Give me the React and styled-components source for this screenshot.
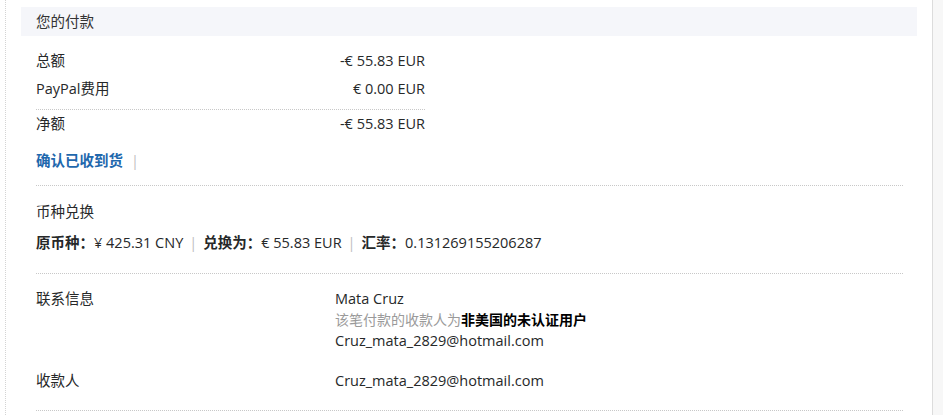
import React from "react";
import styled, { createGlobalStyle } from "styled-components";

const Global = createGlobalStyle`
    html, body {
        margin: 0;
        padding: 0;
        background: #fff;
    }
    body {
        font-family: "Open Sans", "Noto Sans CJK SC", sans-serif;
        color: #262829;
        font-size: 14.5px;
    }
`;

const Frame = styled.div`
    display: flex;
    height: 415px;
    overflow: hidden;
`;

const Main = styled.div`
    flex: 1;
    margin-left: 5px;
    border-left: 1px dotted #d4d4d4;
    border-right: 1px solid #dcdcdc;
    padding: 7px 15px 0 15px;
`;

const Side = styled.div`
    width: 10px;
    background: #f7f7f7;
`;

const Header = styled.div`
    height: 29px;
    line-height: 29px;
    padding-left: 15px;
    background: #f5f6fa;
    color: #333;
`;

const Section = styled.div`
    padding: ${(p) => p.pad || "0"};
    margin: 0 14px 0 15px;
    border-bottom: ${(p) => (p.line ? "1px dotted #c8c8c8" : "none")};
`;

const Summary = styled.div`
    width: 389px;
    margin-top: 11px;
`;

const SumRow = styled.div`
    display: flex;
    justify-content: space-between;
    line-height: 28px;
    border-top: ${(p) => (p.line ? "1px dotted #c8c8c8" : "none")};
    margin-top: ${(p) => (p.line ? "6px" : "0")};
`;

const LinkLine = styled.div`
    line-height: 28px;
    margin-top: 9px;
    padding-bottom: 10px;
`;

const Link = styled.span`
    color: #1f68ad;
    font-weight: 700;
`;

const Pipe = styled.span`
    color: #c0c0c0;
    margin: 0 ${(p) => p.gap || "6px"};
`;

const Title = styled.div`
    line-height: 28px;
`;

const Rate = styled.div`
    line-height: 28px;
    margin-top: 3px;
`;

const B = styled.b`
    font-weight: 700;
`;

const InfoRow = styled.div`
    display: grid;
    grid-template-columns: 299px 1fr;
    line-height: 21px;
    margin-top: ${(p) => p.top};
`;

const Note = styled.div`
    color: #9a9a9a;
    font-size: 14px;

    b {
        color: #000;
        font-weight: 700;
    }
`;

export default function App() {
    return (
        <>
            <Global />
            <Frame>
                <Main>
                    <Header>您的付款</Header>
                    <Section>
                        <Summary>
                            <SumRow>
                                <span>总额</span>
                                <span>-€ 55.83 EUR</span>
                            </SumRow>
                            <SumRow>
                                <span>PayPal费用</span>
                                <span>€ 0.00 EUR</span>
                            </SumRow>
                            <SumRow line>
                                <span>净额</span>
                                <span>-€ 55.83 EUR</span>
                            </SumRow>
                        </Summary>
                    </Section>
                    <Section line>
                        <LinkLine>
                            <Link>确认已收到货</Link>
                            <Pipe gap="8px">|</Pipe>
                        </LinkLine>
                    </Section>
                    <Section line pad="12px 0 16px">
                        <Title>币种兑换</Title>
                        <Rate>
                            <B>原币种：</B>¥ 425.31 CNY<Pipe>|</Pipe>
                            <B>兑换为：</B>€ 55.83 EUR<Pipe>|</Pipe>
                            <B>汇率：</B>0.131269155206287
                        </Rate>
                    </Section>
                    <Section line pad="14px 0 19px">
                        <InfoRow top="0">
                            <span>联系信息</span>
                            <div>
                                <div>Mata Cruz</div>
                                <Note>
                                    该笔付款的收款人为<b>非美国的未认证用户</b>
                                </Note>
                                <div>Cruz_mata_2829@hotmail.com</div>
                            </div>
                        </InfoRow>
                        <InfoRow top="19px">
                            <span>收款人</span>
                            <div>Cruz_mata_2829@hotmail.com</div>
                        </InfoRow>
                    </Section>
                </Main>
                <Side />
            </Frame>
        </>
    );
}
